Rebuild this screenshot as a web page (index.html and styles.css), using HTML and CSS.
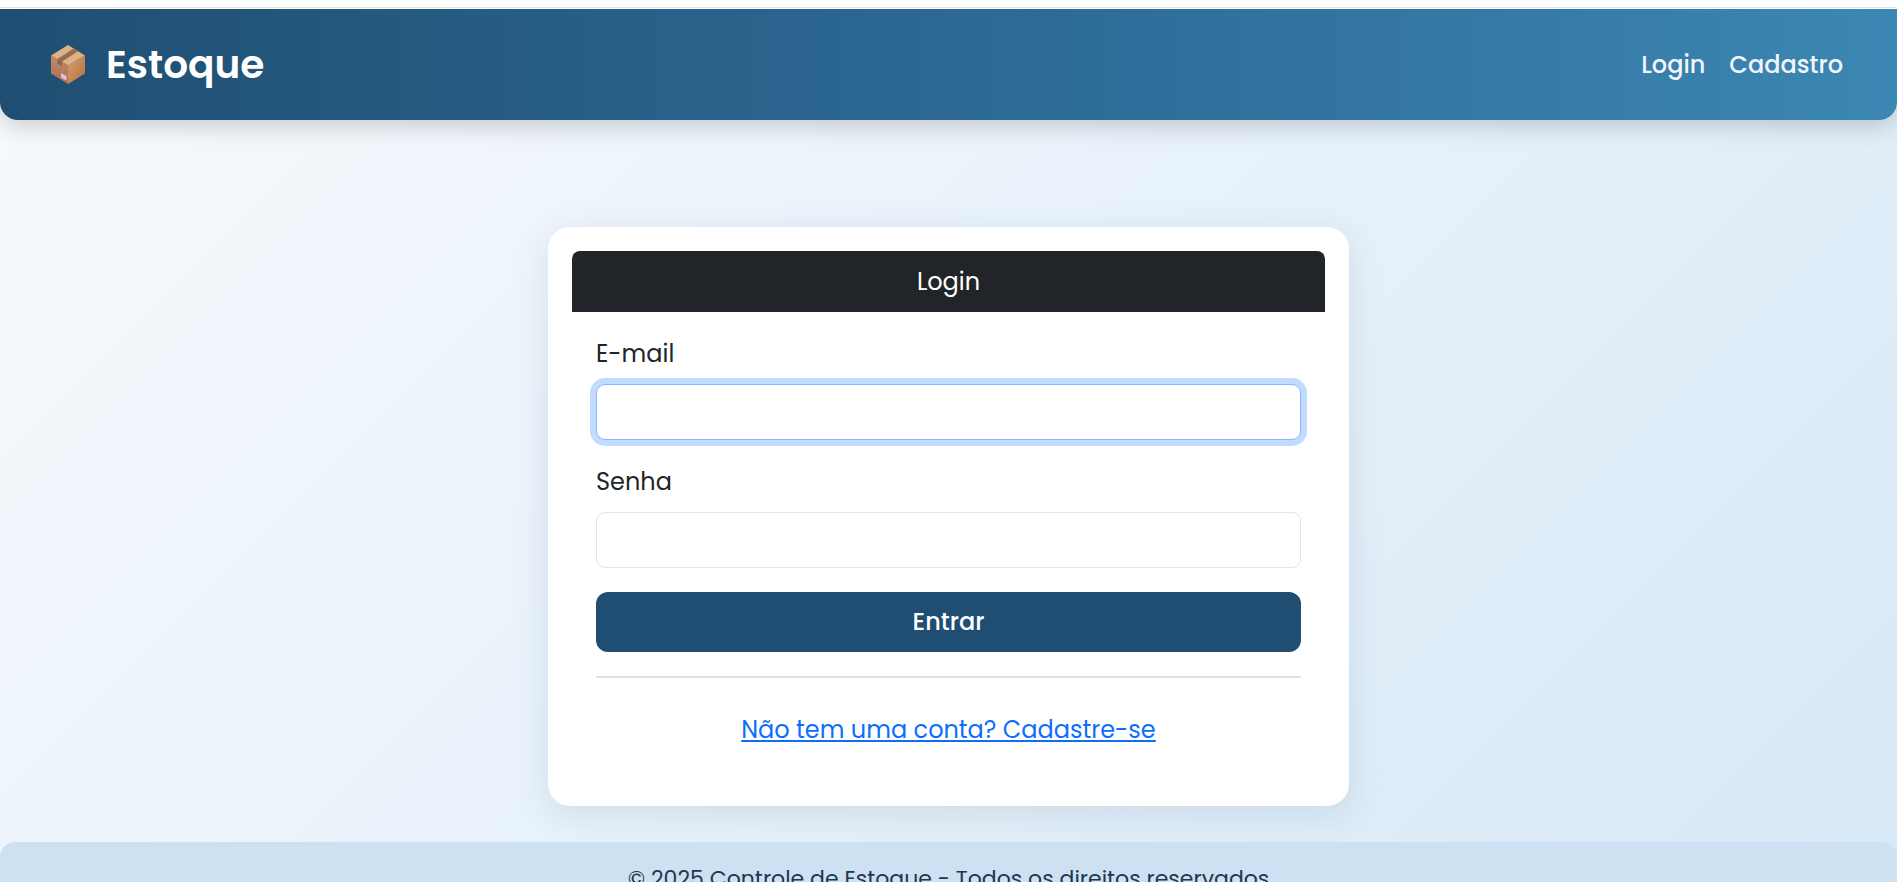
FILE: index.html
```html
<!DOCTYPE html>
<html lang="pt-BR">
<head>
<meta charset="utf-8">
<meta name="viewport" content="width=device-width, initial-scale=1">
<title>Login - Estoque</title>
<link rel="stylesheet" href="styles.css">
</head>
<body>
<div class="top-strip"></div>
<header class="navbar">
  <a class="brand" href="#">
    <svg class="brand-icon" viewBox="0 0 36 40" aria-hidden="true">
      <defs>
        <linearGradient id="left" x1="0" y1="0" x2="0" y2="1"><stop offset="0" stop-color="#c08a6c"/><stop offset="1" stop-color="#b06e4e"/></linearGradient>
        <linearGradient id="right" x1="0" y1="0" x2="1" y2="1"><stop offset="0" stop-color="#d4a07a"/><stop offset="1" stop-color="#b96f30"/></linearGradient>
      </defs>
      <path fill="#dfb283" d="M18 0 35 10.500 18 20.500 1 10.500z"/>
      <path fill="url(#left)" d="M1 10.500 18 20.500V39L1 28.500z"/>
      <path fill="url(#right)" d="M35 10.500 18 20.500V39l17-10.500z"/>
      <path fill="#9b6a55" d="M23.500 3.500 28 6.300 12 16.800 7.500 14z"/>
      <path fill="#8d6252" d="M7.500 14.200 12 16.800V21l-4.500-2.300z"/>
      <path fill="#d5c6d9" d="m11 28 5.500 3v4.700L11 32.500z"/>
    </svg>
    <span>Estoque</span>
  </a>
  <nav class="nav-links">
    <a href="#">Login</a>
    <a href="#">Cadastro</a>
  </nav>
</header>
<main class="content">
  <section class="card">
    <h1 class="card-header">Login</h1>
    <form class="card-body">
      <div class="field">
        <label for="email">E-mail</label>
        <input class="control control-active" type="email" id="email">
      </div>
      <div class="field">
        <label for="senha">Senha</label>
        <input class="control" type="password" id="senha">
      </div>
      <button class="submit" type="submit">Entrar</button>
      <hr class="divider">
      <div class="signup"><a href="#">Não tem uma conta? Cadastre-se</a></div>
    </form>
  </section>
</main>
<footer class="footer">© 2025 Controle de Estoque - Todos os direitos reservados</footer>
</body>
</html>
```
FILE: styles.css
```css
* {
  box-sizing: border-box;
}

html {
  height: 100%;
  overflow: hidden;
}

body {
  margin: 0;
  min-height: 100%;
  font-family: Poppins, Inter, sans-serif;
  font-size: 24px;
  line-height: 36px;
  color: #212529;
  background: linear-gradient(135deg, #f8fafc 0%, #eff5fc 27%, #e4f0f9 62%, #d7e8f6 100%);
}

.top-strip {
  position: relative;
  z-index: 1;
  height: 9px;
  background: linear-gradient(#fff 7px, #e2e2e2 7px, #e2e2e2 8px, #fff 8px);
}

.navbar {
  display: flex;
  align-items: center;
  justify-content: space-between;
  min-height: 111px;
  padding: 24px 54px 24px 50px;
  border-radius: 0 0 18px 18px;
  background: linear-gradient(90deg, #1f4e72 0%, #2f6e9a 60%, #3c87b3 100%);
  box-shadow: 0 6px 24px rgba(0, 0, 0, 0.18);
}

.brand {
  display: flex;
  align-items: center;
  gap: 20px;
  font-size: 39px;
  font-weight: 600;
  color: #fff;
  text-decoration: none;
}

.brand-icon {
  width: 36px;
  height: 40px;
}

.nav-links {
  display: flex;
  gap: 24px;
  font-weight: 500;
}

.nav-links a {
  color: #f1f5f9;
  text-decoration: none;
}

.content {
  padding: 107px 24px 36px;
}

.card {
  max-width: 801px;
  margin: 0 auto;
  padding: 24px;
  border-radius: 22px;
  background: #fff;
  box-shadow: 0 8px 36px rgba(31, 78, 114, 0.12);
}

.card-header {
  margin: 0;
  padding: 13px 24px 12px;
  border-radius: 8px 8px 0 0;
  font-size: 24px;
  font-weight: 400;
  text-align: center;
  color: #fff;
  background: #212529;
}

.card-body {
  padding: 24px;
}

.field {
  margin-bottom: 24px;
}

.field label {
  display: block;
  margin-bottom: 12px;
}

.control {
  display: block;
  width: 100%;
  height: 56px;
  padding: 9px 18px;
  border: 1px solid #e4e4ec;
  border-radius: 9px;
  font: inherit;
  color: inherit;
  background: #fff;
  outline: none;
}

.control:focus,
.control-active {
  border-color: #86b7fe;
  box-shadow: 0 0 0 6px #c2dbff;
}

.submit {
  display: block;
  width: 100%;
  padding: 12px;
  border: 0;
  border-radius: 12px;
  font: inherit;
  font-weight: 500;
  color: #fff;
  background: #1f4e72;
}

.divider {
  height: 2px;
  margin: 24px 0;
  border: 0;
  background: #e0e1e2;
}

.signup {
  padding: 10px 0;
  text-align: center;
}

.signup a {
  color: #0d6efd;
}

.footer {
  padding: 19px 24px 24px;
  border-radius: 15px 15px 0 0;
  font-size: 22px;
  text-align: center;
  color: #20374f;
  background: #cee1f2;
}
```
